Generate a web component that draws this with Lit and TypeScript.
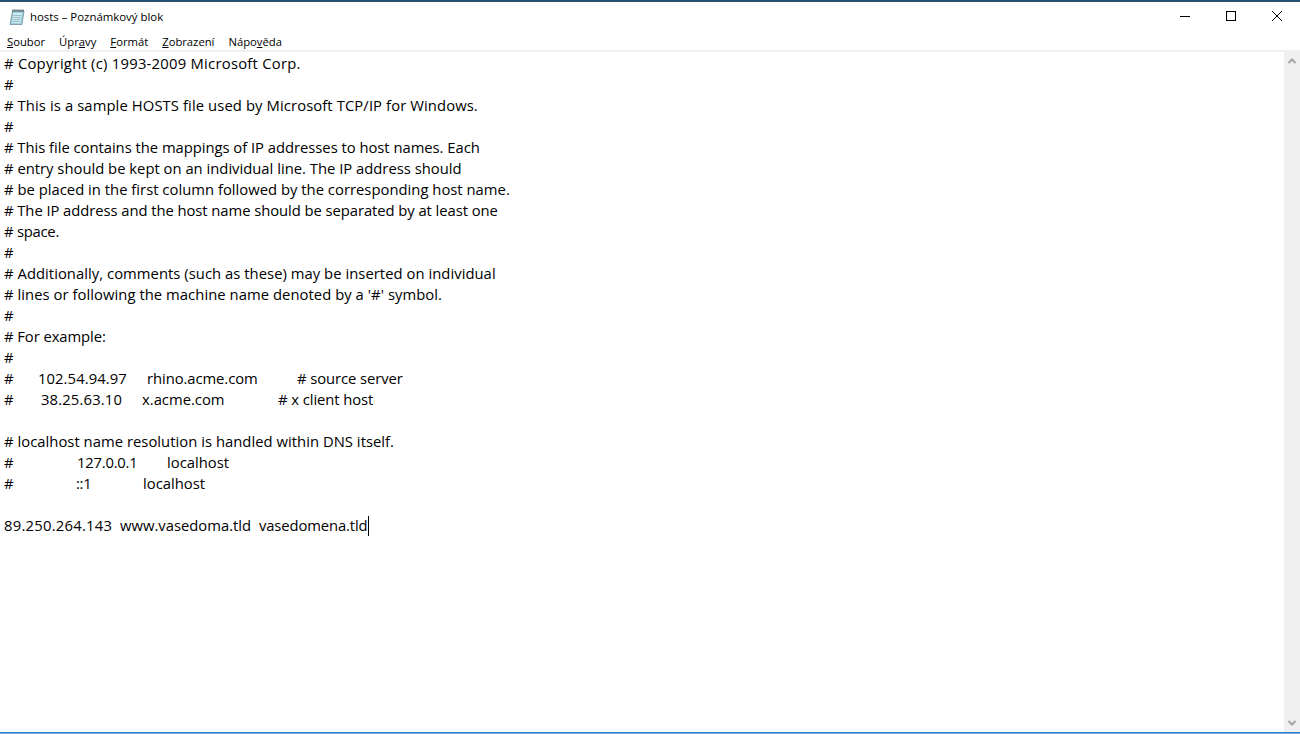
import { LitElement, html, css } from "lit";
import { customElement } from "lit/decorators.js";

type Seg = [string, number, number?];
const L = (t: string, spacing = 0): Seg[] => [[t, 0, spacing]];
const LINES: Seg[][] = [
  L("# Copyright (c) 1993-2009 Microsoft Corp.", 0.25),
  L("#"),
  L("# This is a sample HOSTS file used by Microsoft TCP/IP for Windows.", 0.1),
  L("#"),
  L("# This file contains the mappings of IP addresses to host names. Each", -0.03),
  L("# entry should be kept on an individual line. The IP address should"),
  L("# be placed in the first column followed by the corresponding host name.", 0.015),
  L("# The IP address and the host name should be separated by at least one", -0.06),
  L("# space.", -0.25),
  L("#"),
  L("# Additionally, comments (such as these) may be inserted on individual", 0.04),
  L("# lines or following the machine name denoted by a '#' symbol.", 0.05),
  L("#"),
  L("# For example:", -0.07),
  L("#"),
  [["#", 34], ["102.54.94.97", 109, 0.08], ["rhino.acme.com", 150, -0.07], ["# source server", 0, -0.07]],
  [["#", 37], ["38.25.63.10", 101, 0.15], ["x.acme.com", 136], ["# x client host", 0, -0.07]],
  L(""),
  L("# localhost name resolution is handled within DNS itself.", 0.03),
  [["#", 73], ["127.0.0.1", 90, -0.22], ["localhost", 0]],
  [["#", 72], ["::1", 67, -0.3], ["localhost", 0]],
  L(""),
];

const MENU: [string, string, string][] = [
  ["", "S", "oubor"],
  ["Úpr", "a", "vy"],
  ["", "F", "ormát"],
  ["", "Z", "obrazení"],
  ["Nápo", "v", "ěda"],
];

const segStyle = (w: number, s?: number) =>
  (w ? `width:${w}px;` : "") + (s ? `letter-spacing:${s}px;` : "");

@customElement("app-root")
export class AppRoot extends LitElement {
  static styles = css`
    :host {
      display: flex;
      flex-direction: column;
      width: 1300px;
      height: 734px;
      overflow: hidden;
      background: #fff;
      color: #000;
      font-family: "Open Sans", "Noto Sans", sans-serif;
    }
    .topline { height: 2px; background: #24506f; flex: none; }
    .titlebar {
      flex: none;
      height: 29px;
      display: flex;
      align-items: center;
      padding-left: 9px;
      font-size: 11.4px;
    }
    .appicon { width: 16px; height: 16px; margin-right: 5px; flex: none; }
    .title { flex: 1; }
    .winbtns { display: flex; height: 29px; }
    .winbtn { width: 46px; display: flex; align-items: center; justify-content: center; }
    .winbtn svg { display: block; position: relative; top: -1px; }
    .menubar {
      flex: none;
      height: 17px;
      display: flex;
      align-items: center;
      gap: 14px;
      padding: 3px 0 0 7px;
      margin-top: -1px;
      font-size: 11.25px;
      border-bottom: 2px solid #f0f0f0;
    }
    .main { flex: 1; display: flex; min-height: 0; }
    .editor {
      flex: 1;
      padding: 1px 0 0 4px;
      font-size: 14.8px;
      line-height: 21px;
    }
    .line { height: 21px; display: flex; }
    .seg { display: block; flex: none; white-space: pre; }
    .caret { display: inline-block; width: 1px; height: 20px; background: #000; vertical-align: -5px; }
    .scrollbar {
      flex: none;
      width: 16px;
      background: #f0f0f0;
      display: flex;
      flex-direction: column;
      justify-content: space-between;
      align-items: center;
    }
    .arrow { display: block; margin: 6px 0; }
    .bottom { flex: none; height: 2px; background: linear-gradient(#1a86e0 50%, #7fa6c6 50%); }
  `;

  render() {
    return html`
      <div class="topline"></div>
      <div class="titlebar">
        <svg class="appicon" viewBox="0 0 16 16">
          <path d="M3.5 2H15L13 15.5H1z" fill="#9ccfdb" stroke="#6f8f9d" stroke-width=".8"/>
          <path d="M4.5 4h8.5L11.6 14H3z" fill="#cfe9ee"/>
          <path d="M4.6 6.5h7.8M4.2 8.5h7.8M3.9 10.5h7.8M3.6 12.5h7.8" stroke="#86b6c4" stroke-width=".8"/>
          <path d="M3.5 1.5H15" stroke="#333" stroke-width="2" stroke-dasharray="1 1"/>
        </svg>
        <span class="title">hosts – Poznámkový blok</span>
        <div class="winbtns">
          <div class="winbtn">
            <svg width="10" height="10" viewBox="0 0 10 10"><path d="M0 5.5h10" stroke="#000" fill="none"/></svg>
          </div>
          <div class="winbtn">
            <svg width="10" height="10" viewBox="0 0 10 10"><rect x=".5" y=".5" width="9" height="9" stroke="#000" fill="none"/></svg>
          </div>
          <div class="winbtn">
            <svg width="10" height="10" viewBox="0 0 10 10"><path d="M0 0l10 10M10 0L0 10" stroke="#000" fill="none"/></svg>
          </div>
        </div>
      </div>
      <div class="menubar">
        ${MENU.map(([a, u, b]) => html`<span>${a}<u>${u}</u>${b}</span>`)}
      </div>
      <div class="main">
        <div class="editor">
          ${LINES.map(
            (l) => html`<div class="line">
              ${l.map(([t, w, s]) => html`<span class="seg" style=${segStyle(w, s)}>${t}</span>`)}
            </div>`
          )}
          <div class="line">
            <span class="seg" style=${segStyle(116, 0.25)}>89.250.264.143</span>
            <span class="seg" style=${segStyle(139)}>www.vasedoma.tld</span>
            <span class="seg" style=${segStyle(0, -0.12)}>vasedomena.tld<span class="caret"></span></span>
          </div>
        </div>
        <div class="scrollbar">
          <svg class="arrow" width="8" height="6" viewBox="0 0 8 6"><path d="M.5 5L4 1.5 7.5 5" stroke="#a6a6a6" stroke-width="2" fill="none"/></svg>
          <svg class="arrow" width="8" height="6" viewBox="0 0 8 6"><path d="M.5 1L4 4.5 7.5 1" stroke="#a6a6a6" stroke-width="2" fill="none"/></svg>
        </div>
      </div>
      <div class="bottom"></div>
    `;
  }
}
